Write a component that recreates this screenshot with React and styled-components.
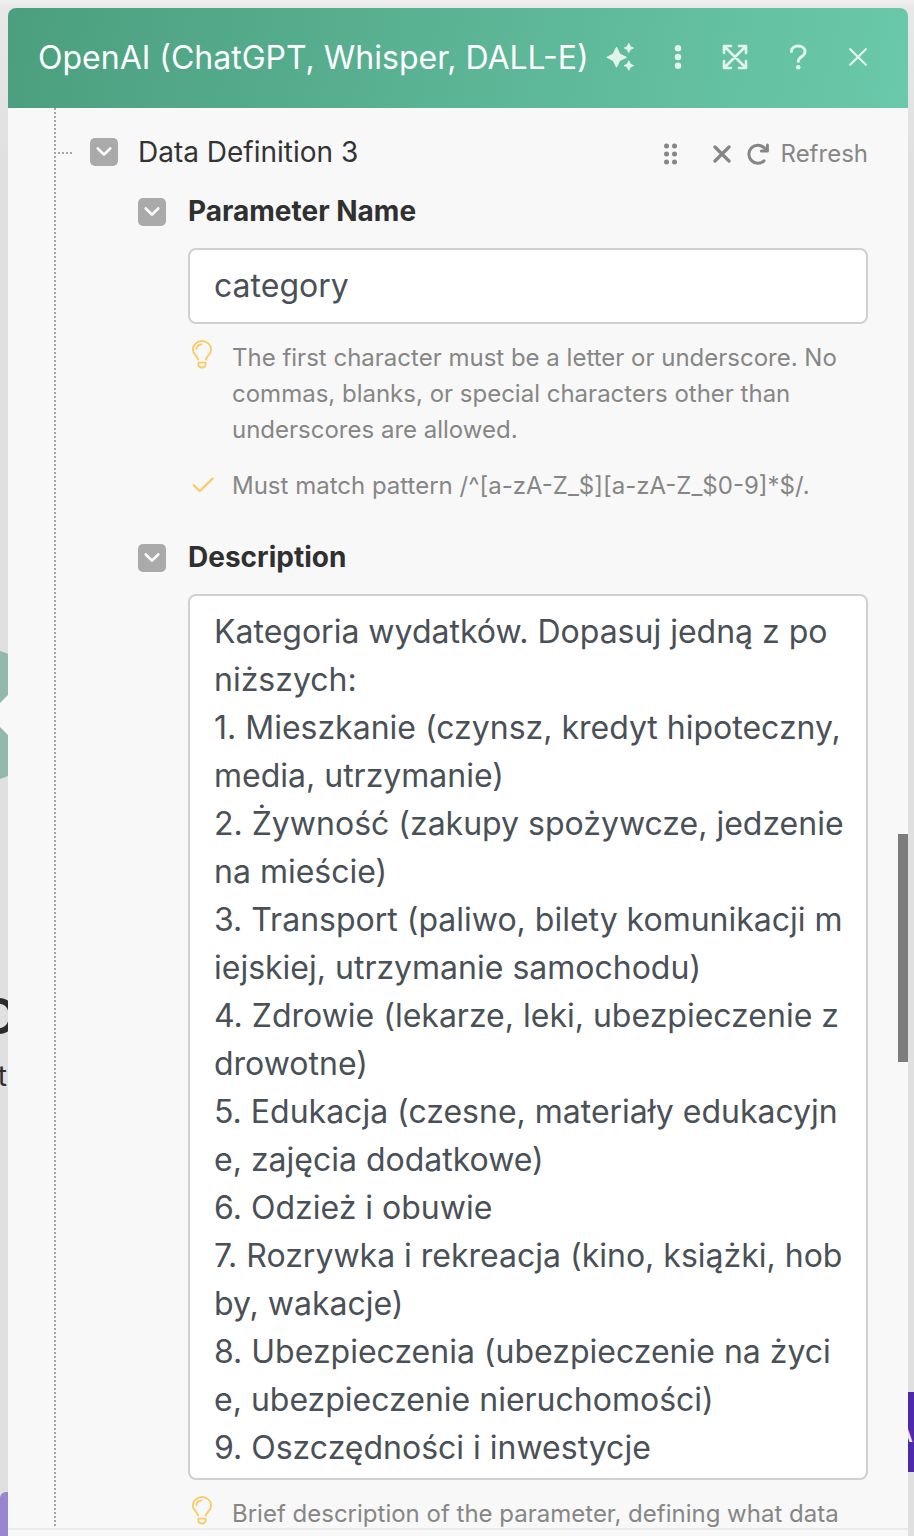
import React from 'react';
import styled, { createGlobalStyle } from 'styled-components';

const Global = createGlobalStyle`
  *, *::before, *::after { box-sizing: border-box; }
  body { margin: 0; background: #e0e0e0; font-family: Inter, "Liberation Sans", sans-serif; }
  button, input, textarea { font-family: inherit; margin: 0; }
  p, h1 { margin: 0; }
`;

const Screen = styled.div`
  position: relative;
  height: 100vh;
  padding: 8px 6px 0 8px;
  overflow: hidden;
  background: linear-gradient(#efefef, #e8e8e8 8px, #e0e0e0 160px);
`;

const CanvasNode = styled.svg`
  position: absolute;
  left: 0;
  top: 640px;
`;

const CanvasText = styled.span`
  position: absolute;
  right: calc(100% - ${(p) => p.$end}px);
  top: ${(p) => p.$top}px;
  font-size: ${(p) => p.$size}px;
  line-height: ${(p) => p.$size}px;
  font-weight: ${(p) => p.$weight};
  color: #2d2d2d;
`;

const PurpleTab = styled.div`
  position: absolute;
  left: 0;
  bottom: 0;
  width: 24px;
  height: 44px;
  border-radius: 6px 0 0 0;
  background: #9a86cf;
`;

const ActionTab = styled.div`
  position: absolute;
  right: -18px;
  top: 1392px;
  width: 40px;
  height: 80px;
  padding: 2px 0 0 4px;
  display: flex;
  align-items: center;
  font-size: 24px;
  font-weight: 500;
  color: #e6e6e6;
  background: #4e28ad;
`;

const Panel = styled.section`
  position: relative;
  height: 100%;
  display: flex;
  flex-direction: column;
  overflow: hidden;
  border-radius: 8px 8px 0 0;
  background: #f8f8f8;
`;

const Header = styled.header`
  flex: none;
  height: 100px;
  padding: 0 40px 2px 30px;
  display: flex;
  align-items: center;
  justify-content: space-between;
  background: linear-gradient(100deg, #4b9f7f, #6ac9aa);
`;

const Title = styled.h1`
  padding-top: 2px;
  font-size: 32px;
  line-height: 48px;
  font-weight: 400;
  white-space: nowrap;
  color: #fff;
`;

const HeaderActions = styled.div`
  display: flex;
  align-items: center;
  gap: 40px;
  color: #e0f4ec;
`;

const IconButton = styled.button`
  display: flex;
  align-items: center;
  justify-content: center;
  padding: 0;
  border: 0;
  background: none;
  color: inherit;
  cursor: pointer;
`;

const Body = styled.div`
  position: relative;
  flex: 1;
  min-height: 0;
  overflow: hidden;
  padding: 22px 40px 0 82px;
`;

const TreeLine = styled.span`
  position: absolute;
  left: 46px;
  top: 0;
  bottom: 0;
  width: 2px;
  background: repeating-linear-gradient(#a8a8a8 0 2px, transparent 2px 4px);
`;

const TreeBranch = styled.span`
  position: absolute;
  left: 50px;
  top: 44px;
  width: 16px;
  height: 2px;
  background: repeating-linear-gradient(90deg, #a8a8a8 0 2px, transparent 2px 4px);
`;

const ScrollThumb = styled.span`
  position: absolute;
  right: 0;
  top: 51.1%;
  width: 10px;
  height: 16.1%;
  background: #7d7d7d;
`;

const Row = styled.div`
  display: flex;
  align-items: center;
  height: 44px;
`;

const Toggle = styled.button`
  flex: none;
  width: 28px;
  height: 28px;
  padding: 0;
  border: 0;
  border-radius: 5px;
  display: flex;
  align-items: center;
  justify-content: center;
  background: #aaa;
  color: #fff;
`;

const GroupName = styled.span`
  margin-left: 20px;
  font-size: 28px;
  line-height: 44px;
  color: #333;
`;

const RowActions = styled.div`
  margin-left: auto;
  padding-top: 4px;
  display: flex;
  align-items: center;
  gap: 16px;
  color: #868686;
`;

const Grip = styled(IconButton)`
  margin-right: 20px;
`;

const RefreshButton = styled(IconButton)`
  gap: 12px;
  font-size: 24px;
  line-height: 36px;
`;

const Field = styled.div`
  margin: ${(p) => (p.$first ? 16 : 32)}px 0 0 48px;
`;

const Label = styled.label`
  margin-left: 22px;
  padding-bottom: 2px;
  font-size: 28px;
  line-height: 42px;
  font-weight: 700;
  color: #303030;
`;

const FieldContent = styled.div`
  margin: 14px 0 0 50px;
`;

const TextInput = styled.input`
  display: block;
  width: 100%;
  height: 76px;
  padding: 0 24px 2px;
  border: 2px solid #d0d0d0;
  border-radius: 8px;
  outline: 0;
  background: #fff;
  font-size: 32px;
  color: #4a5057;
`;

const TextArea = styled.textarea`
  display: block;
  width: 100%;
  height: 886px;
  padding: 12px 22px 6px 24px;
  border: 2px solid #d0d0d0;
  border-radius: 8px;
  outline: 0;
  resize: none;
  overflow: hidden;
  background: #fff;
  font-size: 32px;
  line-height: 48px;
  word-break: break-all;
  color: #4a5057;
`;

const Hint = styled.div`
  display: flex;
  gap: 16px;
  margin-top: ${(p) => p.$gap}px;
  font-size: 24px;
  line-height: 36px;
  color: #868686;

  svg { flex: none; }
`;

const Footer = styled.footer`
  flex: none;
  height: 8px;
  border-top: 2px solid #ececec;
`;

const ChevronIcon = () => (
  <svg width="16" height="10" viewBox="0 0 16 10" fill="none" stroke="currentColor" strokeWidth="2.6" strokeLinecap="round" strokeLinejoin="round" aria-hidden="true">
    <path d="M1.800 1.500 8 7.600l6.200-6.100" />
  </svg>
);

const SparklesIcon = () => (
  <svg width="28" height="30" viewBox="0 0 28 30" fill="currentColor" stroke="currentColor" strokeLinejoin="round" aria-hidden="true">
    <path d="M10.500 5.200 13.800 12 20.500 15.300 13.800 18.600 10.500 25.200 7.200 18.600.8 15.300 7.200 12z" />
    <path d="M22.800 1.200 24.400 4.500 27.500 6 24.400 7.600 22.800 10.700 21.200 7.600 18.100 6 21.200 4.500z" strokeWidth=".8" />
    <path d="M22.800 18.700 24.400 22 27.500 23.600 24.400 25.100 22.800 28.400 21.200 25.100 18.100 23.600 21.200 22z" strokeWidth=".8" />
  </svg>
);

const MoreIcon = () => (
  <svg width="8" height="26" viewBox="0 0 8 26" fill="currentColor" aria-hidden="true">
    <circle cx="4" cy="4.300" r="3.200" />
    <circle cx="4" cy="13" r="3.200" />
    <circle cx="4" cy="21.700" r="3.200" />
  </svg>
);

const ExpandIcon = () => (
  <svg width="26" height="26" viewBox="0 0 26 26" fill="none" stroke="currentColor" strokeWidth="2.600" strokeLinecap="round" strokeLinejoin="round" aria-hidden="true">
    <path d="M2 9V2h7M17 2h7v7M24 17v7h-7M9 24H2v-7M2.500 2.500l21 21M23.500 2.500l-21 21" />
  </svg>
);

const HelpIcon = () => (
  <svg width="20" height="26" viewBox="0 0 20 26" fill="none" stroke="currentColor" strokeWidth="2.900" strokeLinecap="round" strokeLinejoin="round" aria-hidden="true">
    <path d="M3.400 7.600C3.500 4.300 6 2 10.100 2c4.200 0 6.900 2.300 6.900 5.600 0 2.600-1.500 3.900-3.500 5.200-2.200 1.500-3.200 2.600-3.200 4.800" />
    <circle cx="10.200" cy="23.200" r="2.300" fill="currentColor" stroke="none" />
  </svg>
);

const CloseIcon = ({ size, weight }) => (
  <svg width={size} height={size} viewBox="0 0 20 20" fill="none" stroke="currentColor" strokeWidth={weight} strokeLinecap="round" aria-hidden="true">
    <path d="M2.200 2.200l15.600 15.600M17.800 2.200 2.200 17.800" />
  </svg>
);

const GripIcon = () => (
  <svg width="14" height="22" viewBox="0 0 14 22" fill="currentColor" aria-hidden="true">
    {[3, 11, 19].map((y) => (
      <React.Fragment key={y}>
        <circle cx="3.500" cy={y} r="2.500" />
        <circle cx="11.500" cy={y} r="2.500" />
      </React.Fragment>
    ))}
  </svg>
);

const RefreshIcon = () => (
  <svg width="22" height="22" viewBox="0 0 22 22" fill="none" stroke="currentColor" strokeWidth="3" strokeLinecap="round" strokeLinejoin="round" aria-hidden="true">
    <path d="M17 17.800A9 9 0 1 1 17.400 5L20 7.500" />
    <path d="M20.400 2v6H14.400" />
  </svg>
);

const BulbIcon = () => (
  <svg width="28" height="30" viewBox="0 1 28 30" fill="none" stroke="#f7cc6a" strokeWidth="1.900" strokeLinecap="round" strokeLinejoin="round" aria-hidden="true">
    <path d="M10.200 20.600c-.5-3.200-5.400-5.200-5.400-10.200A9.200 9.200 0 0 1 14 1.950a9.200 9.200 0 0 1 9.200 8.450c0 5-4.900 7-5.400 10.200" />
    <path d="M8.600 10c0-2.600 2-4.300 4.800-4.500" />
    <path d="M10.400 23.600h7.200v1.700c0 1.900-1.500 3.200-3.600 3.200s-3.600-1.300-3.600-3.200z" />
  </svg>
);

const CheckIcon = () => (
  <svg width="28" height="34" viewBox="0 0 28 34" fill="none" stroke="#f7cc6a" strokeWidth="2.300" strokeLinecap="round" strokeLinejoin="round" aria-hidden="true">
    <path d="M5.600 17.200l6.200 5.800L24.600 10.600" />
  </svg>
);

const categories = `Kategoria wydatków. Dopasuj jedną z poniższych:
1. Mieszkanie (czynsz, kredyt hipoteczny, media, utrzymanie)
2. Żywność (zakupy spożywcze, jedzenie na mieście)
3. Transport (paliwo, bilety komunikacji miejskiej, utrzymanie samochodu)
4. Zdrowie (lekarze, leki, ubezpieczenie zdrowotne)
5. Edukacja (czesne, materiały edukacyjne, zajęcia dodatkowe)
6. Odzież i obuwie
7. Rozrywka i rekreacja (kino, książki, hobby, wakacje)
8. Ubezpieczenia (ubezpieczenie na życie, ubezpieczenie nieruchomości)
9. Oszczędności i inwestycje`;

export default function App() {
  return (
    <Screen>
      <Global />
      <CanvasNode width="60" height="150" viewBox="0 0 60 150" aria-hidden="true">
        <circle cx="-20" cy="75" r="67" fill="#92b9ac" />
        <path d="M-12 75 28 35v80z" fill="#f8f8f8" />
      </CanvasNode>
      <CanvasText $end={18} $top={991} $size={50} $weight={600}>O</CanvasText>
      <CanvasText $end={7} $top={1062} $size={28} $weight={400}>t</CanvasText>
      <PurpleTab />
      <ActionTab>A</ActionTab>

      <Panel>
        <Header>
          <Title>OpenAI (ChatGPT, Whisper, DALL-E)</Title>
          <HeaderActions>
            <IconButton type="button" aria-label="Assistant"><SparklesIcon /></IconButton>
            <IconButton type="button" aria-label="More"><MoreIcon /></IconButton>
            <IconButton type="button" aria-label="Expand"><ExpandIcon /></IconButton>
            <IconButton type="button" aria-label="Help"><HelpIcon /></IconButton>
            <IconButton type="button" aria-label="Close"><CloseIcon size={20} weight={2.3} /></IconButton>
          </HeaderActions>
        </Header>

        <Body>
          <TreeLine />
          <TreeBranch />
          <Row>
            <Toggle type="button" aria-label="Collapse Data Definition 3"><ChevronIcon /></Toggle>
            <GroupName>Data Definition 3</GroupName>
            <RowActions>
              <Grip type="button" aria-label="Move"><GripIcon /></Grip>
              <IconButton type="button" aria-label="Remove"><CloseIcon size={18} weight={3.6} /></IconButton>
              <RefreshButton type="button"><RefreshIcon />Refresh</RefreshButton>
            </RowActions>
          </Row>

          <Field $first>
            <Row>
              <Toggle type="button" aria-label="Collapse Parameter Name"><ChevronIcon /></Toggle>
              <Label htmlFor="parameter-name">Parameter Name</Label>
            </Row>
            <FieldContent>
              <TextInput id="parameter-name" type="text" defaultValue="category" />
              <Hint $gap={16}>
                <BulbIcon />
                <p>The first character must be a letter or underscore. No commas, blanks, or special characters other than underscores are allowed.</p>
              </Hint>
              <Hint $gap={20}>
                <CheckIcon />
                <p>Must match pattern /^[a-zA-Z_$][a-zA-Z_$0-9]*$/.</p>
              </Hint>
            </FieldContent>
          </Field>

          <Field>
            <Row>
              <Toggle type="button" aria-label="Collapse Description"><ChevronIcon /></Toggle>
              <Label htmlFor="description">Description</Label>
            </Row>
            <FieldContent>
              <TextArea id="description" spellCheck={false} defaultValue={categories} />
              <Hint $gap={16}>
                <BulbIcon />
                <p>Brief description of the parameter, defining what data</p>
              </Hint>
            </FieldContent>
          </Field>
          <ScrollThumb />
        </Body>
        <Footer />
      </Panel>
    </Screen>
  );
}
